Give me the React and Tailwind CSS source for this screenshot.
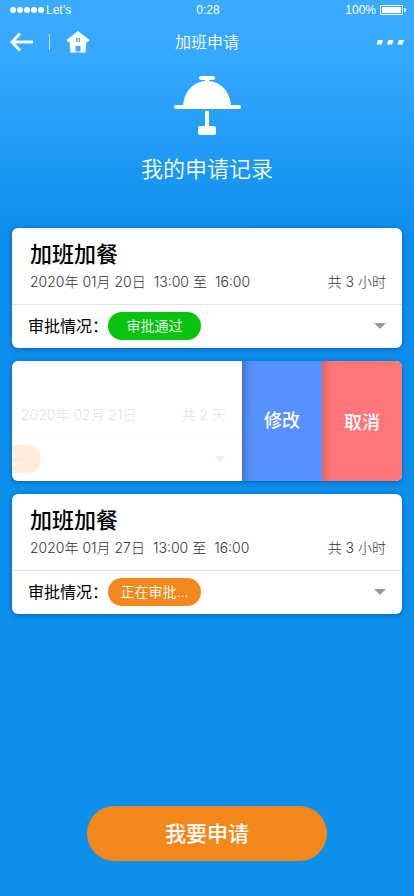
// App.jsx
const records = [
  {
    id: 1,
    title: '加班加餐',
    dates: ['2020年 01月 20日', '13:00 至', '16:00'],
    total: '共 3 小时',
    status: 'passed',
  },
  {
    id: 2,
    dates: ['2020年 02月 21日'],
    total: '共 2 天',
    status: 'pending',
    open: true,
  },
  {
    id: 3,
    title: '加班加餐',
    dates: ['2020年 01月 27日', '13:00 至', '16:00'],
    total: '共 3 小时',
    status: 'pending',
  },
];

const statuses = {
  passed: { text: '审批通过', color: 'bg-[#09c40f]' },
  pending: { text: '正在审批...', color: 'bg-[#f2881b]' },
};

function StatusBar() {
  return (
    <div className="grid grid-cols-3 items-center h-5 pl-2.5 pr-2 text-xs font-['Liberation_Sans',sans-serif]">
      <div className="flex items-center gap-0.5">
        <svg width="34" height="6" viewBox="0 0 34 6" fill="currentColor" aria-hidden="true">
          <circle cx="3" cy="3" r="3" />
          <circle cx="10" cy="3" r="3" />
          <circle cx="17" cy="3" r="3" />
          <circle cx="24" cy="3" r="3" />
          <circle cx="31" cy="3" r="3" />
        </svg>
        <span>Let’s</span>
      </div>
      <span className="text-center">0:28</span>
      <div className="flex items-center justify-end gap-1">
        <span>100%</span>
        <svg width="26" height="10" viewBox="0 0 26 10" aria-hidden="true">
          <rect x="0.5" y="0.5" width="22" height="9" fill="none" stroke="currentColor" />
          <rect x="2" y="2" width="19" height="6" fill="currentColor" />
          <path d="M24 3h1l1 1v2l-1 1h-1z" fill="currentColor" />
        </svg>
      </div>
    </div>
  );
}

function NavBar() {
  return (
    <nav className="grid grid-cols-3 items-center h-11 px-2.5">
      <div className="flex items-center gap-4">
        <button type="button" aria-label="返回">
          <svg width="23" height="20" viewBox="0 0 23 20" fill="none" stroke="currentColor" strokeWidth="3">
            <path d="M10 1.5 2 10l8 8.500M2 10h21" />
          </svg>
        </button>
        <span className="w-px h-4 bg-white/70" />
        <button type="button" aria-label="首页">
          <svg width="24" height="22" viewBox="0 0 24 22" fill="currentColor" fillRule="evenodd">
            <path d="M12 0 23.500 9 22 11H20.500L19.500 21.500H4.500L3.500 11H2L0.500 9ZM10 7V8.700H11.600V7ZM12.400 7V8.700H14V7ZM10 9.300V11H11.600V9.300ZM12.400 9.300V11H14V9.300ZM9.500 15V20.500H14.500V15Z" />
          </svg>
        </button>
      </div>
      <h1 className="text-center text-base font-[350]">加班申请</h1>
      <button type="button" aria-label="更多" className="justify-self-end">
        <svg width="28" height="5" viewBox="0 0 28 5" fill="currentColor">
          <path d="M2 0H7L5.500 4.500H0.500ZM12.500 0h5L16 4.500H11ZM23 0H28L26.500 4.500H21.500Z" />
        </svg>
      </button>
    </nav>
  );
}

function StatusPill({ status }) {
  return (
    <span
      className={`block w-[93px] h-7 rounded-full text-center text-sm leading-7 font-[350] text-white ${statuses[status].color}`}
    >
      {statuses[status].text}
    </span>
  );
}

function DateRow({ record }) {
  return (
    <div className="flex justify-between text-sm leading-6 font-light text-[#333]">
      <p className="flex gap-2">
        {record.dates.map((part) => (
          <span key={part}>{part}</span>
        ))}
      </p>
      <p>{record.total}</p>
    </div>
  );
}

function ExpandButton() {
  return (
    <button type="button" aria-label="展开" className="ml-auto">
      <svg width="12" height="6" viewBox="0 0 12 6" fill="#999">
        <path d="M0 0h12L6 6z" />
      </svg>
    </button>
  );
}

function RecordCard({ record }) {
  return (
    <li className="rounded-md bg-white shadow-[0_1px_5px_rgba(0,50,120,0.5)]">
      <div className="flex flex-col justify-end h-[77px] pb-2.5 pl-[18px] pr-4 border-b border-[#e2e2e2]">
        <h3 className="text-[22px] leading-8 font-medium text-black">{record.title}</h3>
        <DateRow record={record} />
      </div>
      <div className="flex items-center h-[43px] px-4 pb-0.5">
        <span className="w-20 text-base whitespace-nowrap text-black">审批情况：</span>
        <StatusPill status={record.status} />
        <ExpandButton />
      </div>
    </li>
  );
}

// Card slid to the left, with its actions showing
function OpenRecordCard({ record }) {
  return (
    <li className="flex h-[120px] rounded-md overflow-hidden bg-white shadow-[0_1px_5px_rgba(0,50,120,0.5)]">
      <div className="flex-1 min-w-0 overflow-hidden">
        <div className="opacity-15">
          <div className="flex flex-col justify-end h-[77px] pb-2.5 pl-[9px] pr-4 border-b border-[#e2e2e2]">
            <DateRow record={record} />
          </div>
          <div className="flex items-center h-[43px] pr-4 pb-0.5 -ml-16">
            <StatusPill status={record.status} />
            <ExpandButton />
          </div>
        </div>
      </div>
      <button
        type="button"
        className="w-20 shrink-0 bg-[#5591ff] text-lg font-medium shadow-[inset_8px_0_8px_-6px_rgba(0,0,0,0.3)]"
      >
        修改
      </button>
      <button
        type="button"
        className="w-20 shrink-0 bg-[#ff7578] pt-1 text-lg font-medium shadow-[inset_8px_0_8px_-6px_rgba(0,0,0,0.2)]"
      >
        取消
      </button>
    </li>
  );
}

function App() {
  return (
    <div className="flex flex-col min-h-screen text-white bg-[#0d8fec] bg-[linear-gradient(#3aabff_0,#35a8ff_60px,#0d8fec_230px)] font-[Inter,'Noto_Sans_CJK_SC',sans-serif]">
      <StatusBar />
      <NavBar />

      <header className="flex flex-col items-center pt-3">
        <svg width="68" height="60" viewBox="0 0 68 60" fill="currentColor" aria-hidden="true">
          <rect x="26" y="0" width="16" height="4" rx="2" />
          <rect x="32" y="2" width="4" height="5" />
          <path d="M10 30C11 15 21 5 34 5s23 10 24 25z" />
          <rect x="1" y="29" width="67" height="4" rx="2" />
          <rect x="32" y="35" width="4" height="17" />
          <rect x="25" y="50" width="18" height="9" rx="2" />
        </svg>
        <h2 className="mt-[17px] text-[22px] leading-8 font-[350]">我的申请记录</h2>
      </header>

      <ul className="flex flex-col gap-[13px] mt-[43px] px-3">
        {records.map((record) =>
          record.open ? (
            <OpenRecordCard key={record.id} record={record} />
          ) : (
            <RecordCard key={record.id} record={record} />
          )
        )}
      </ul>

      <div className="flex justify-center mt-auto px-6 pt-8 pb-[35px]">
        <button type="button" className="w-60 h-[55px] rounded-full bg-[#f2881b] text-[21px] font-medium">
          我要申请
        </button>
      </div>
    </div>
  );
}

export default App;
